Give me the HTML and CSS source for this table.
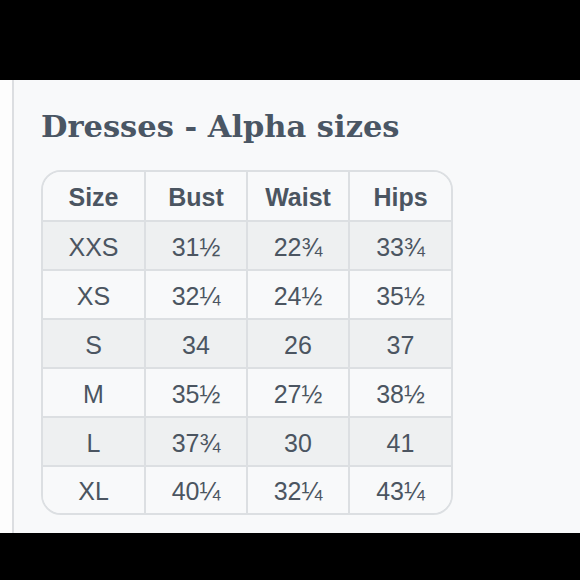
FILE: index.html
```html
<!DOCTYPE html>
<html>
<head>
<meta charset="utf-8">
<link rel="stylesheet" href="styles.css">
</head>
<body>
<div class="topbar"></div>
<div class="main">
  <div class="gutter"></div>
  <div class="content">
    <h1 class="title">Dresses - Alpha sizes</h1>
    <div class="table-wrap">
      <table class="sizes">
        <thead>
          <tr><th>Size</th><th>Bust</th><th>Waist</th><th>Hips</th></tr>
        </thead>
        <tbody>
          <tr class="alt"><td>XXS</td><td>31½</td><td>22¾</td><td>33¾</td></tr>
          <tr><td>XS</td><td>32¼</td><td>24½</td><td>35½</td></tr>
          <tr class="alt"><td>S</td><td>34</td><td>26</td><td>37</td></tr>
          <tr><td>M</td><td>35½</td><td>27½</td><td>38½</td></tr>
          <tr class="alt"><td>L</td><td>37¾</td><td>30</td><td>41</td></tr>
          <tr><td>XL</td><td>40¼</td><td>32¼</td><td>43¼</td></tr>
        </tbody>
      </table>
    </div>
  </div>
</div>
<div class="bottombar"></div>
</body>
</html>
```
FILE: styles.css
```css
html, body {
  margin: 0;
  padding: 0;
  background: #000;
}
.topbar {
  height: 80px;
  background: #000;
}
.main {
  height: 453px;
  display: flex;
  background: #f8f9fa;
}
.gutter {
  width: 12px;
  background: #fdfdfd;
  border-right: 2px solid #dcdee1;
}
.content {
  flex: 1;
  padding: 26px 0 0 27px;
}
.title {
  margin: 0 0 24px 0;
  font-family: "DejaVu Serif", "Liberation Serif", serif;
  font-weight: bold;
  font-size: 30.5px;
  line-height: 40px;
  color: #4a5664;
}
.table-wrap {
  width: 408px;
  border: 2px solid #dcdfe2;
  border-radius: 20px;
  overflow: hidden;
}
.sizes {
  width: 100%;
  border-collapse: collapse;
  table-layout: fixed;
  font-family: "Liberation Sans", Arial, sans-serif;
  color: #4b5561;
}
.sizes th, .sizes td {
  box-sizing: border-box;
  height: 49px;
  padding: 3px 0 0 0;
  text-align: center;
  border-right: 2px solid #dcdfe2;
  border-bottom: 2px solid #dcdfe2;
  font-size: 25px;
}
.sizes th:last-child, .sizes td:last-child {
  border-right: none;
}
.sizes tbody tr:last-child td {
  border-bottom: none;
  height: 47px;
}
.sizes th {
  font-weight: bold;
  background: #f8f9fa;
}
.sizes td {
  background: #f8f9fa;
}
.sizes tr.alt td {
  background: #eef0f1;
}
```
